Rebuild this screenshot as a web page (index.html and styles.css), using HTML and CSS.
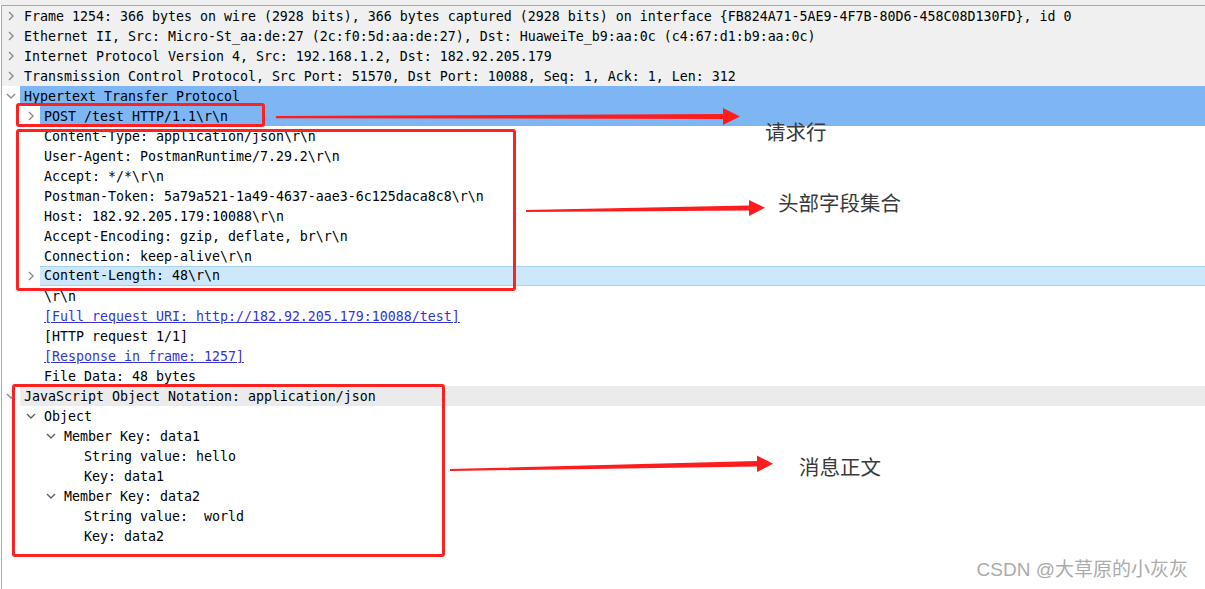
FILE: index.html
```html
<!DOCTYPE html>
<html lang="zh-CN">
<head>
<meta charset="utf-8">
<title>Wireshark packet details</title>
<link rel="stylesheet" href="styles.css">
</head>
<body>
<div class="page">
  <div class="topband"></div>
  <div class="panel">
    <div class="row grey lvl0"><span class="tw"><svg class="chev" viewBox="0 0 10 10"><path d="M3 1 L7 5 L3 9"/></svg></span><span class="label">Frame 1254: 366 bytes on wire (2928 bits), 366 bytes captured (2928 bits) on interface {FB824A71-5AE9-4F7B-80D6-458C08D130FD}, id 0</span></div>
    <div class="row grey lvl0"><span class="tw"><svg class="chev" viewBox="0 0 10 10"><path d="M3 1 L7 5 L3 9"/></svg></span><span class="label">Ethernet II, Src: Micro-St_aa:de:27 (2c:f0:5d:aa:de:27), Dst: HuaweiTe_b9:aa:0c (c4:67:d1:b9:aa:0c)</span></div>
    <div class="row grey lvl0"><span class="tw"><svg class="chev" viewBox="0 0 10 10"><path d="M3 1 L7 5 L3 9"/></svg></span><span class="label">Internet Protocol Version 4, Src: 192.168.1.2, Dst: 182.92.205.179</span></div>
    <div class="row grey lvl0"><span class="tw"><svg class="chev" viewBox="0 0 10 10"><path d="M3 1 L7 5 L3 9"/></svg></span><span class="label">Transmission Control Protocol, Src Port: 51570, Dst Port: 10088, Seq: 1, Ack: 1, Len: 312</span></div>
    <div class="row lvl0"><span class="tw"><svg class="chev" viewBox="0 0 10 10"><path d="M1 3 L5 7 L9 3"/></svg></span><span class="label sel">Hypertext Transfer Protocol</span></div>
    <div class="row lvl1"><span class="tw"><svg class="chev" viewBox="0 0 10 10"><path d="M3 1 L7 5 L3 9"/></svg></span><span class="label sel">POST /test HTTP/1.1\r\n</span></div>
    <div class="row lvl1"><span class="tw"></span><span class="label">Content-Type: application/json\r\n</span></div>
    <div class="row lvl1"><span class="tw"></span><span class="label">User-Agent: PostmanRuntime/7.29.2\r\n</span></div>
    <div class="row lvl1"><span class="tw"></span><span class="label">Accept: */*\r\n</span></div>
    <div class="row lvl1"><span class="tw"></span><span class="label">Postman-Token: 5a79a521-1a49-4637-aae3-6c125daca8c8\r\n</span></div>
    <div class="row lvl1"><span class="tw"></span><span class="label">Host: 182.92.205.179:10088\r\n</span></div>
    <div class="row lvl1"><span class="tw"></span><span class="label">Accept-Encoding: gzip, deflate, br\r\n</span></div>
    <div class="row lvl1"><span class="tw"></span><span class="label">Connection: keep-alive\r\n</span></div>
    <div class="row lvl1"><span class="tw"><svg class="chev" viewBox="0 0 10 10"><path d="M3 1 L7 5 L3 9"/></svg></span><span class="label hover">Content-Length: 48\r\n</span></div>
    <div class="row lvl1"><span class="tw"></span><span class="label">\r\n</span></div>
    <div class="row lvl1"><span class="tw"></span><span class="label"><a class="link" href="#">[Full request URI: http://182.92.205.179:10088/test]</a></span></div>
    <div class="row lvl1"><span class="tw"></span><span class="label">[HTTP request 1/1]</span></div>
    <div class="row lvl1"><span class="tw"></span><span class="label"><a class="link" href="#">[Response in frame: 1257]</a></span></div>
    <div class="row lvl1"><span class="tw"></span><span class="label">File Data: 48 bytes</span></div>
    <div class="row lvl0"><span class="tw"><svg class="chev" viewBox="0 0 10 10"><path d="M1 3 L5 7 L9 3"/></svg></span><span class="label json">JavaScript Object Notation: application/json</span></div>
    <div class="row lvl1"><span class="tw"><svg class="chev dark" viewBox="0 0 10 10"><path d="M1 3 L5 7 L9 3"/></svg></span><span class="label">Object</span></div>
    <div class="row lvl2"><span class="tw"><svg class="chev dark" viewBox="0 0 10 10"><path d="M1 3 L5 7 L9 3"/></svg></span><span class="label">Member Key: data1</span></div>
    <div class="row lvl3"><span class="tw"></span><span class="label">String value: hello</span></div>
    <div class="row lvl3"><span class="tw"></span><span class="label">Key: data1</span></div>
    <div class="row lvl2"><span class="tw"><svg class="chev dark" viewBox="0 0 10 10"><path d="M1 3 L5 7 L9 3"/></svg></span><span class="label">Member Key: data2</span></div>
    <div class="row lvl3"><span class="tw"></span><span class="label">String value:  world</span></div>
    <div class="row lvl3"><span class="tw"></span><span class="label">Key: data2</span></div>
  </div>

  <div class="box box-req"></div>
  <div class="box box-head"></div>
  <div class="box box-body"></div>

  <svg class="arrows" viewBox="0 0 1205 589" width="1205" height="589">
    <polygon points="276,116 723,114 723,108 740,116.5 723,125 723,119 276,118.2"/>
    <polygon points="526,210 749,205.5 749,200 765,207.8 749,216 749,210.5 526,212"/>
    <polygon points="450,469 757,461 757,455.5 773,463.8 757,472 757,466.5 450,471"/>
  </svg>

  <div class="note note-req">请求行</div>
  <div class="note note-head">头部字段集合</div>
  <div class="note note-body">消息正文</div>
  <div class="watermark">CSDN @大草原的小灰灰</div>
</div>
</body>
</html>
```

FILE: styles.css
```css
html, body {
  margin: 0;
  padding: 0;
  background: #ffffff;
}

.page {
  position: relative;
  width: 1205px;
  height: 589px;
  overflow: hidden;
  font-family: "DejaVu Sans Mono", "Liberation Mono", monospace;
  font-size: 13.29px;
  color: #000000;
}

.topband {
  height: 5px;
  background: #f0f0f0;
}

.panel {
  margin-left: 1px;
  height: 584px;
  border-top: 1px solid #a8a8a8;
  border-left: 1px solid #a8a8a8;
  box-sizing: border-box;
}

.row {
  display: flex;
  height: 20px;
  line-height: 20px;
  white-space: pre;
}

.row.grey {
  background: #f0f0f0;
}

.lvl0 { padding-left: 0; }
.lvl1 { padding-left: 20px; }
.lvl2 { padding-left: 40px; }
.lvl3 { padding-left: 60px; }

.tw {
  width: 18px;
  flex: 0 0 18px;
  display: flex;
  align-items: center;
  justify-content: center;
}

.chev {
  width: 10px;
  height: 10px;
  fill: none;
  stroke: #8a8a8a;
  stroke-width: 1.4;
}

.chev.dark {
  stroke: #606060;
}

.label {
  flex: 1;
  padding-left: 4px;
  padding-top: 1px;
  line-height: 19px;
  box-sizing: border-box;
}

.label.sel {
  background: #7eb6f4;
}

.label.hover {
  background: #cde8fb;
  border-top: 1px solid #a6d2f2;
  border-bottom: 1px solid #a6d2f2;
  padding-top: 0;
  line-height: 18px;
}

.label.json {
  background: #ebebeb;
}

.link {
  color: #3434d6;
  text-decoration: underline;
}

.box {
  position: absolute;
  border: 3px solid #ff2020;
  border-radius: 3px;
  box-sizing: border-box;
}

.box-req {
  left: 16px;
  top: 103px;
  width: 249px;
  height: 24px;
}

.box-head {
  left: 16px;
  top: 129px;
  width: 500px;
  height: 162px;
}

.box-body {
  left: 12px;
  top: 384px;
  width: 433px;
  height: 173px;
}

.arrows {
  position: absolute;
  left: 0;
  top: 0;
  fill: #ff1c1c;
}

.note {
  position: absolute;
  font-family: "Noto Sans CJK SC", "Noto Sans", sans-serif;
  font-size: 20.5px;
  line-height: 24px;
  color: #3a3a3a;
}

.note-req {
  left: 765px;
  top: 119px;
}

.note-head {
  left: 778px;
  top: 190px;
}

.note-body {
  left: 799px;
  top: 454px;
}

.watermark {
  position: absolute;
  right: 17px;
  top: 558px;
  font-family: "Liberation Sans", "Noto Sans CJK SC", sans-serif;
  font-size: 19px;
  line-height: 24px;
  color: #ababab;
  white-space: nowrap;
}
```
